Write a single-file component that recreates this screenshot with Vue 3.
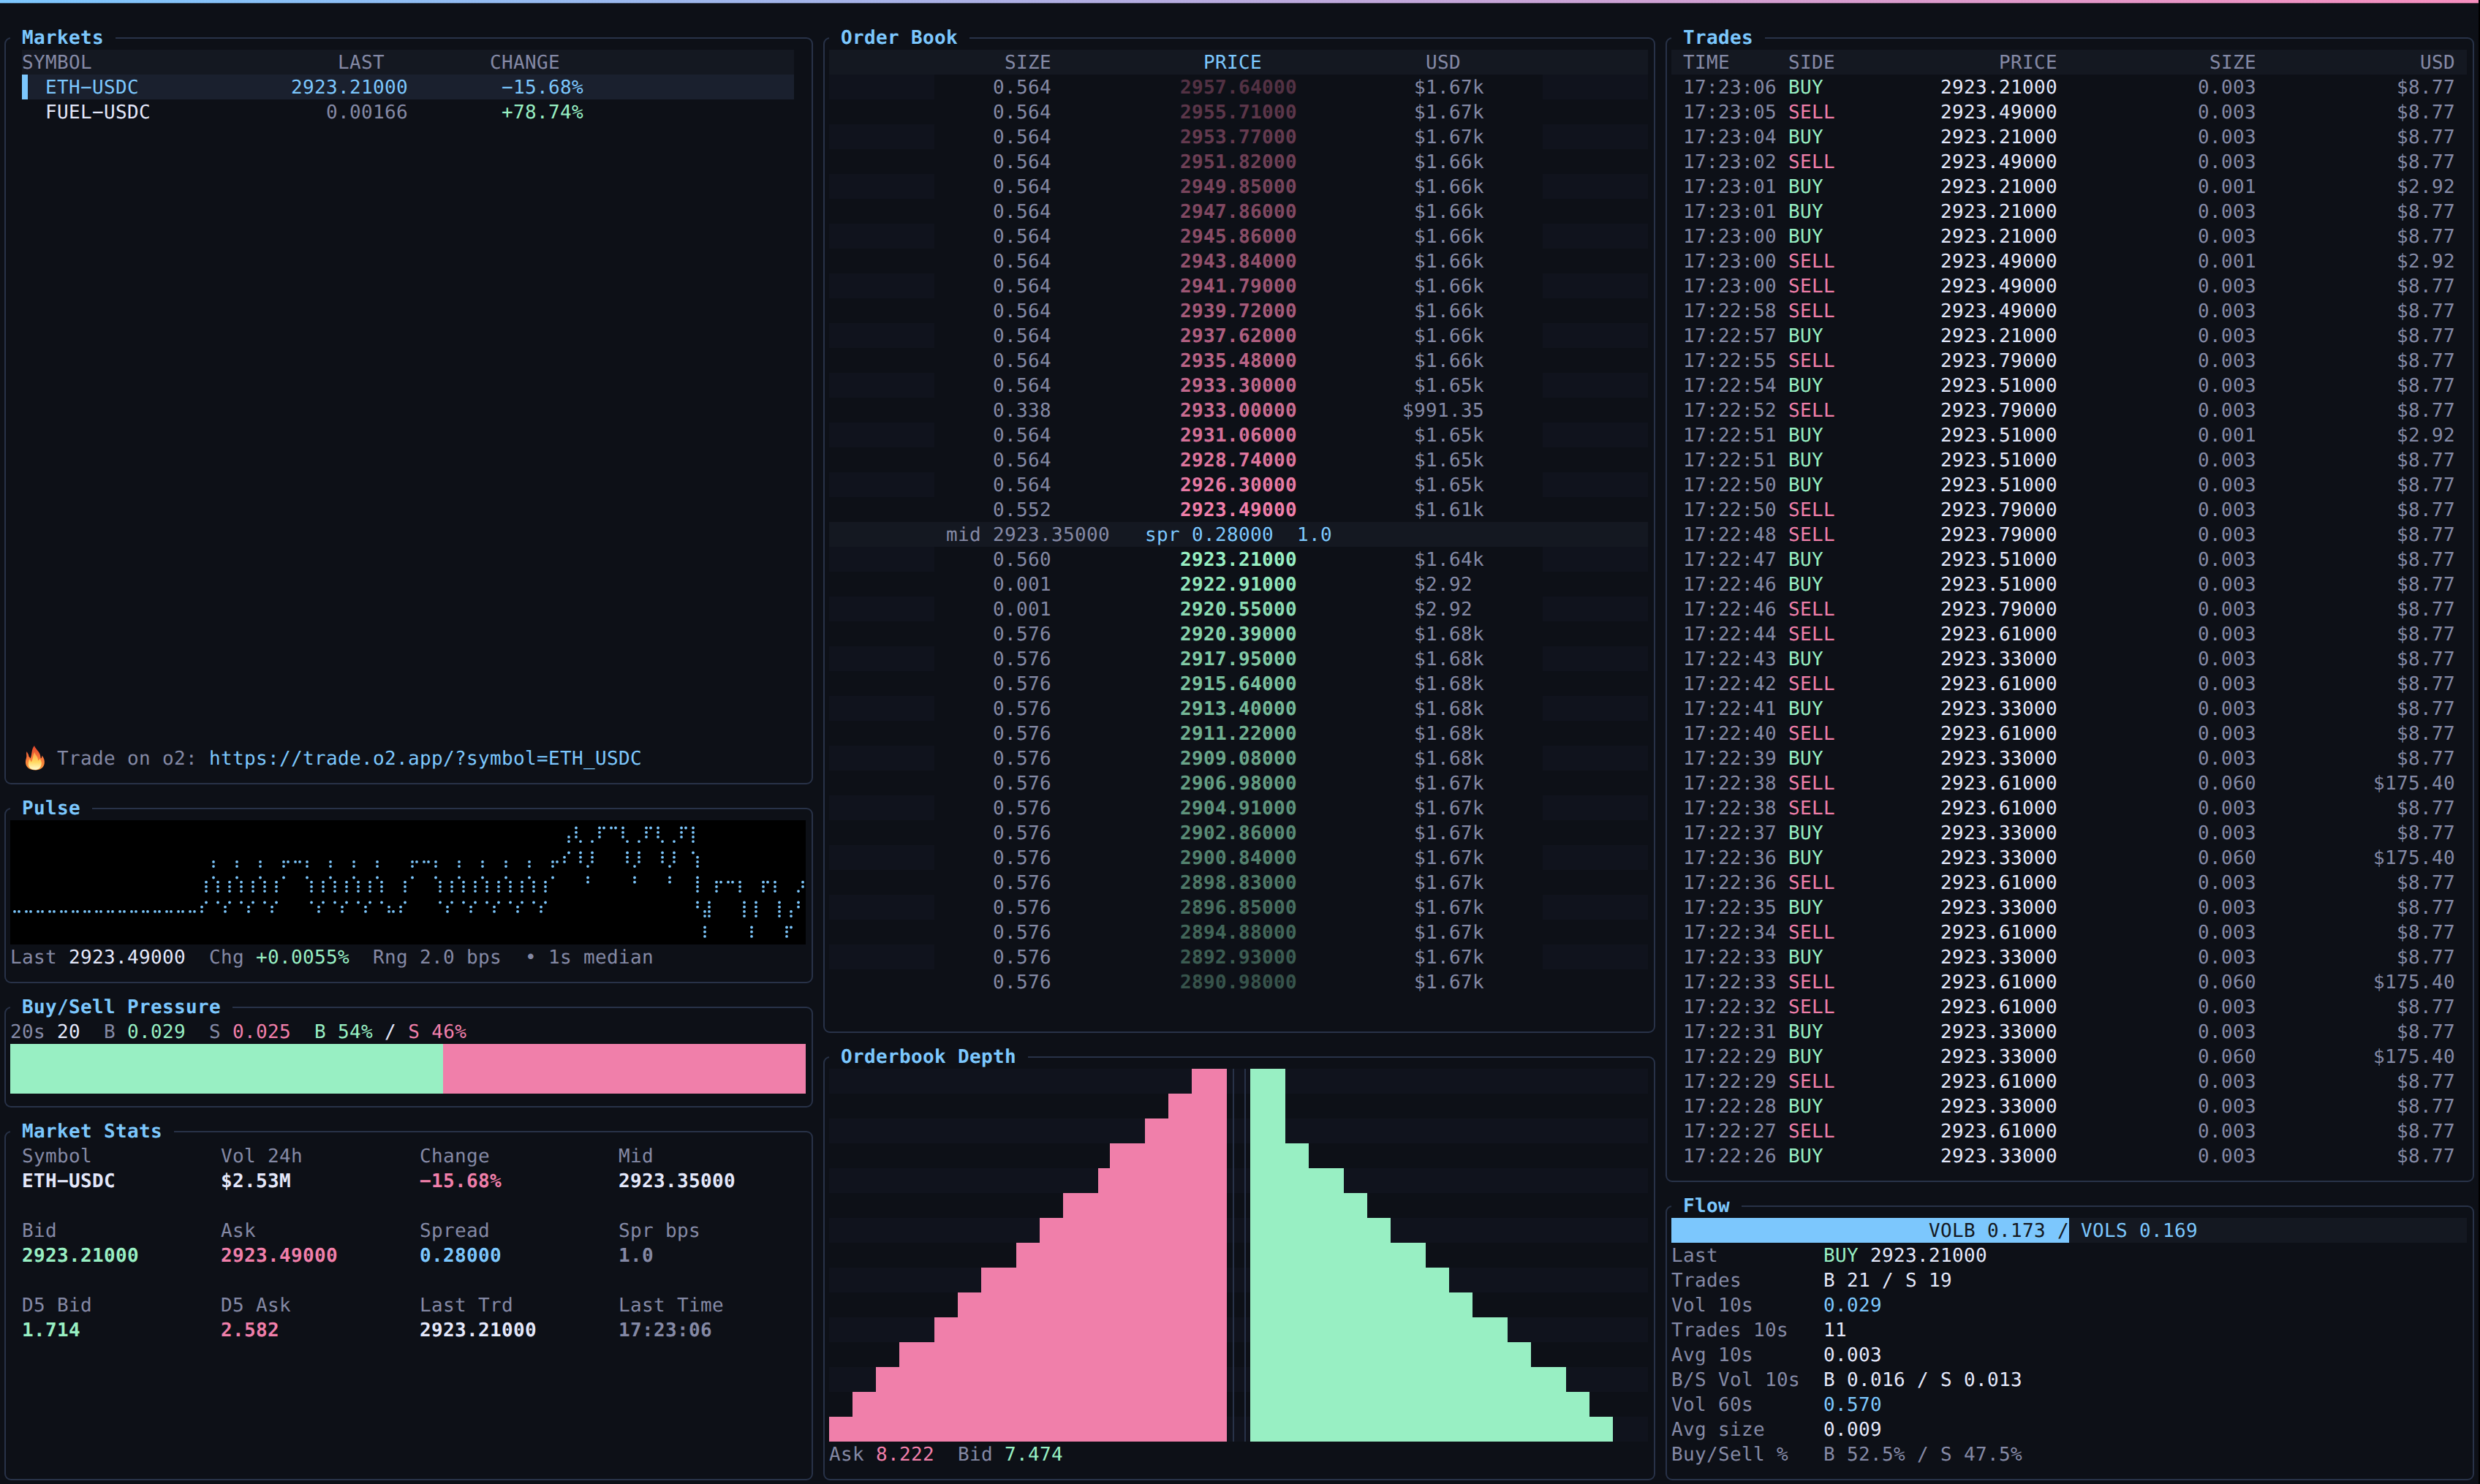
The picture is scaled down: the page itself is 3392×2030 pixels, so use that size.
<script setup>
const markets = [
  { symbol: 'ETH−USDC', last: '2923.21000', change: '−15.68%', active: true },
  { symbol: 'FUEL−USDC', last: '0.00166', change: '+78.74%', active: false },
]

// Sparkline: one [top, bottom] dot range per half-cell column, on a 20-dot high canvas.
const peak = [6, 8]
const slope = [9, 12]
const low = [13, 14]
const top = [6, 6]
const climb = [3, 6]
const wave = (n) => Array.from({ length: n }, () => [peak, slope, low, slope]).flat()
const pulse = [
  ...Array.from({ length: 32 }, () => [14, 14]),
  low, slope, ...wave(3),
  peak, top, top, top, peak, slope, low, slope,
  ...wave(2), peak, slope, low, [14, 14], low, slope,
  peak, top, top, top, peak, slope, low, slope,
  ...wave(4),
  peak, top, [5, 6], [2, 4], [0, 2], climb, [7, 9], climb,
  [0, 2], [0, 0], [0, 0], [0, 0], [0, 2], climb, [7, 9], climb,
  [0, 2], [0, 0], [0, 2], climb, [7, 9], climb,
  [0, 2], [0, 0], [0, 4], [5, 13], [14, 18], [12, 15],
  [9, 11], [9, 9], [9, 9], [9, 9], [9, 11], [12, 15], [16, 18], [12, 15],
  [9, 11], [9, 9], [9, 11], [12, 15], [16, 18], [14, 16], [11, 13], [9, 10],
]
const dots = pulse.flatMap(([a, b], i) => {
  const out = []
  for (let l = a; l <= b; l++) {
    out.push({
      x: Math.floor(i / 2) * 16 + (i % 2 ? 12 : 6),
      y: Math.floor(l / 4) * 34 + 10.5 + (l % 4) * 6.2,
    })
  }
  return out
})

// Status lines: [text, tone] runs, spacing included.
const pulseLine = [
  ['Last ', 'muted'], ['2923.49000', 'white'], ['  Chg ', 'muted'], ['+0.0055%', 'green'],
  ['  Rng 2.0 bps  • 1s median', 'muted'],
]
const pressureLine = [
  ['20s ', 'muted'], ['20', 'white'], ['  B ', 'muted'], ['0.029', 'green'],
  ['  S ', 'muted'], ['0.025', 'pink'], ['  B 54%', 'green'], [' / ', 'white'], ['S 46%', 'pink'],
]
const midLine = [['mid 2923.35000', 'muted'], ['   spr 0.28000  1.0', 'blue']]
const depthLine = [
  ['Ask ', 'muted'], ['8.222', 'pink'], ['  Bid ', 'muted'], ['7.474', 'green'],
]

const stats = [
  ['Symbol', 'ETH−USDC', 'white'], ['Vol 24h', '$2.53M', 'white'],
  ['Change', '−15.68%', 'pink'], ['Mid', '2923.35000', 'white'],
  ['Bid', '2923.21000', 'green'], ['Ask', '2923.49000', 'pink'],
  ['Spread', '0.28000', 'blue'], ['Spr bps', '1.0', 'muted'],
  ['D5 Bid', '1.714', 'green'], ['D5 Ask', '2.582', 'pink'],
  ['Last Trd', '2923.21000', 'white'], ['Last Time', '17:23:06', 'muted'],
]

// Odd-length values sit half a cell to the left, on the character grid.
const even = (s) => (s.length % 2 ? s + ' ' : s)

const asks = `0.564 2957.64 1.67k|0.564 2955.71 1.67k|0.564 2953.77 1.67k|0.564 2951.82 1.66k
|0.564 2949.85 1.66k|0.564 2947.86 1.66k|0.564 2945.86 1.66k|0.564 2943.84 1.66k
|0.564 2941.79 1.66k|0.564 2939.72 1.66k|0.564 2937.62 1.66k|0.564 2935.48 1.66k
|0.564 2933.30 1.65k|0.338 2933.00 991.35|0.564 2931.06 1.65k|0.564 2928.74 1.65k
|0.564 2926.30 1.65k|0.552 2923.49 1.61k`
const bids = `0.560 2923.21 1.64k|0.001 2922.91 2.92|0.001 2920.55 2.92|0.576 2920.39 1.68k
|0.576 2917.95 1.68k|0.576 2915.64 1.68k|0.576 2913.40 1.68k|0.576 2911.22 1.68k
|0.576 2909.08 1.68k|0.576 2906.98 1.67k|0.576 2904.91 1.67k|0.576 2902.86 1.67k
|0.576 2900.84 1.67k|0.576 2898.83 1.67k|0.576 2896.85 1.67k|0.576 2894.88 1.67k
|0.576 2892.93 1.67k|0.576 2890.98 1.67k`
const parseBook = (src) =>
  src.split('|').map((r) => {
    const [size, price, usd] = r.trim().split(' ')
    return { size, price: price + '000', usd: '$' + usd }
  })
const book = [
  {
    key: 'ask',
    tone: 'pink',
    rows: parseBook(asks).map((r, i, all) => ({ ...r, fade: 0.3 + (0.7 * i) / (all.length - 1) })),
  },
  {
    key: 'bid',
    tone: 'green',
    rows: parseBook(bids).map((r, i, all) => ({ ...r, fade: 1 - (0.7 * i) / (all.length - 1) })),
  },
]

const depthAsk = [3, 5, 7, 10, 11, 14, 16, 18, 21, 23, 25, 28, 30, 32, 34]
const depthBid = [3, 3, 3, 5, 8, 10, 12, 15, 17, 19, 22, 24, 27, 29, 31]
const depth = depthAsk.map((ask, i) => ({ ask, bid: depthBid[i] }))

const trades = `23:06 B 21 3|23:05 S 49 3|23:04 B 21 3|23:02 S 49 3|23:01 B 21 1|23:01 B 21 3
|23:00 B 21 3|23:00 S 49 1|23:00 S 49 3|22:58 S 49 3|22:57 B 21 3|22:55 S 79 3
|22:54 B 51 3|22:52 S 79 3|22:51 B 51 1|22:51 B 51 3|22:50 B 51 3|22:50 S 79 3
|22:48 S 79 3|22:47 B 51 3|22:46 B 51 3|22:46 S 79 3|22:44 S 61 3|22:43 B 33 3
|22:42 S 61 3|22:41 B 33 3|22:40 S 61 3|22:39 B 33 3|22:38 S 61 60|22:38 S 61 3
|22:37 B 33 3|22:36 B 33 60|22:36 S 61 3|22:35 B 33 3|22:34 S 61 3|22:33 B 33 3
|22:33 S 61 60|22:32 S 61 3|22:31 B 33 3|22:29 B 33 60|22:29 S 61 3|22:28 B 33 3
|22:27 S 61 3|22:26 B 33 3`
  .split('|')
  .map((r) => {
    const [time, side, cents, milli] = r.trim().split(' ')
    return {
      time: '17:' + time,
      side: side === 'B' ? 'BUY' : 'SELL',
      price: `2923.${cents}000`,
      size: '0.' + milli.padStart(3, '0'),
      usd: { 1: '$2.92', 3: '$8.77', 60: '$175.40' }[milli],
    }
  })

const flow = [
  ['Trades', 'B 21 / S 19', 'white'],
  ['Vol 10s', '0.029', 'blue'],
  ['Trades 10s', '11', 'white'],
  ['Avg 10s', '0.003', 'white'],
  ['B/S Vol 10s', 'B 0.016 / S 0.013', 'white'],
  ['Vol 60s', '0.570', 'blue'],
  ['Avg size', '0.009', 'white'],
  ['Buy/Sell %', 'B 52.5% / S 47.5%', 'muted'],
]
</script>

<template>
  <div class="screen">
    <div class="topbar"><i class="glow"></i><i class="edge"></i></div>
    <main class="columns">
      <div class="column">
        <section class="panel markets">
          <h2>Markets</h2>
          <div class="market head">
            <span>SYMBOL</span><span class="last">LAST</span><span class="change">CHANGE</span>
          </div>
          <div v-for="m in markets" :key="m.symbol" class="market" :class="{ active: m.active }">
            <span class="symbol">{{ m.symbol }}</span>
            <span class="last">{{ m.last }}</span>
            <span class="change">{{ m.change }}</span>
          </div>
          <div class="promo">
            <svg class="fire" viewBox="0 0 32 34">
              <defs>
                <linearGradient id="flame" x1="0" y1="0" x2="0" y2="1">
                  <stop offset="0" stop-color="#e0452c" />
                  <stop offset=".5" stop-color="#f7763a" />
                  <stop offset="1" stop-color="#fb9a3c" />
                </linearGradient>
                <linearGradient id="core" x1="0" y1="0" x2="0" y2="1">
                  <stop offset="0" stop-color="#fca048" />
                  <stop offset=".55" stop-color="#ffd75e" />
                  <stop offset="1" stop-color="#fffbd0" />
                </linearGradient>
              </defs>
              <path fill="url(#flame)" d="M17 0C18 4 24 8 25 13C25.600 15 25.500 16.500 26 17.500C27 16.500 27.500 15 27.600 13.500C30 17 31.300 20 30.800 24C30 30 25 33.500 18.500 33.500C11 33.500 5.500 30 5 23.500C4.700 20 6 18 6.300 15C6.500 12 5.500 11 6.500 8C7.500 10 9.300 11.500 9.500 15C10.500 15.500 11 16.500 11.500 17.500C14 13 12.500 5 17 0Z" />
              <path fill="url(#core)" d="M17.500 9C18 13 22.500 15 22 20.500C23.500 19.500 24 18.500 24.500 18C26.500 21 27.300 23 26.500 26C25.500 30.500 22.500 33 18 33C12.500 33 9 30 8.800 25.500C8.700 22.500 9.500 20.500 10 18.500C11.500 19.500 12.200 21 12.500 22.500C15.500 19 14.500 13 17.500 9Z" />
            </svg>
            <span>Trade on o2: <b class="link">https://trade.o2.app/?symbol=ETH_USDC</b></span>
          </div>
        </section>

        <section class="panel pulse">
          <h2>Pulse</h2>
          <svg class="spark" viewBox="0 0 1088 170">
            <circle v-for="(d, i) in dots" :key="i" :cx="d.x" :cy="d.y" r="1.9" />
          </svg>
          <p><i v-for="([text, tone], i) in pulseLine" :key="i" :class="tone">{{ text }}</i></p>
        </section>

        <section class="panel pressure">
          <h2>Buy/Sell Pressure</h2>
          <p><i v-for="([text, tone], i) in pressureLine" :key="i" :class="tone">{{ text }}</i></p>
          <div class="ratio"><i class="buy"></i><i class="sell"></i></div>
        </section>

        <section class="panel stats">
          <h2>Market Stats</h2>
          <div class="stat-grid">
            <div v-for="[label, value, tone] in stats" :key="label" class="stat">
              <span>{{ label }}</span><strong :class="tone">{{ value }}</strong>
            </div>
          </div>
        </section>
      </div>

      <div class="column">
        <section class="panel orderbook">
          <h2>Order Book</h2>
          <div class="level head">
            <i></i><span>SIZE</span><span class="blue">{{ even('PRICE') }}</span><span>{{ even('USD') }}</span><i></i>
          </div>
          <template v-for="side in book" :key="side.key">
            <p v-if="side.key === 'bid'" class="mid"><i v-for="([text, tone], i) in midLine" :key="i" :class="tone">{{ text }}</i></p>
            <div v-for="(r, i) in side.rows" :key="r.price" class="level" :class="{ striped: i % 2 === 0 }">
              <i></i>
              <span>{{ even(r.size) }}</span>
              <strong :class="side.tone" :style="{ opacity: r.fade }">{{ r.price }}</strong>
              <span>{{ even(r.usd) }}</span>
              <i></i>
            </div>
          </template>
        </section>

        <section class="panel depth">
          <h2>Orderbook Depth</h2>
          <div v-for="(d, i) in depth" :key="i" class="bar-row" :class="{ striped: i % 2 === 0 }">
            <div class="half ask"><i :style="{ width: d.ask * 16 + 'px' }"></i></div>
            <div class="axis"><i></i><i></i></div>
            <div class="half bid"><i :style="{ width: d.bid * 16 + 'px' }"></i></div>
          </div>
          <p><i v-for="([text, tone], i) in depthLine" :key="i" :class="tone">{{ text }}</i></p>
        </section>
      </div>

      <div class="column">
        <section class="panel trades">
          <h2>Trades</h2>
          <div class="trade head">
            <span>TIME</span><span>SIDE</span><span>PRICE</span><span>SIZE</span><span>USD</span>
          </div>
          <div v-for="(t, i) in trades" :key="i" class="trade">
            <span>{{ t.time }}</span>
            <span :class="t.side === 'BUY' ? 'green' : 'pink'">{{ t.side }}</span>
            <span class="white">{{ t.price }}</span>
            <span>{{ t.size }}</span>
            <span>{{ t.usd }}</span>
          </div>
        </section>

        <section class="panel flow">
          <h2>Flow</h2>
          <div class="volume"><span class="volb">VOLB 0.173 /</span><span class="vols">VOLS 0.169</span></div>
          <div class="fact"><span>Last</span><span class="white"><i class="green">BUY</i> 2923.21000</span></div>
          <div v-for="[label, value, tone] in flow" :key="label" class="fact">
            <span>{{ label }}</span><span :class="tone">{{ value }}</span>
          </div>
        </section>
      </div>
    </main>
  </div>
</template>

<style>
body {
  margin: 0;
  background: #000;
}
</style>

<style scoped>
/* Everything sits on a 16 x 34 character grid; the 36px line box centres glyphs in a 34px row. */
.screen {
  --bg: #0d1017;
  --head: #141821;
  --stripe: #10131d;
  --line: #283248;
  --muted: #8489a5;
  --blue: #7cc7fd;
  --green: #98efc3;
  --pink: #f07faa;
  box-sizing: border-box;
  width: 3390px;
  height: 2030px;
  overflow: hidden;
  background: var(--bg);
  color: var(--muted);
  font: 26px/36px "DejaVu Sans Mono", "Liberation Mono", monospace;
  letter-spacing: 0.3467px;
  text-rendering: geometricPrecision;
  font-variant-ligatures: none;
  white-space: pre;
}
i {
  font-style: normal;
}
.white { color: #e4e8fb; }
.green { color: var(--green); }
.pink { color: var(--pink); }
.blue { color: var(--blue); }
.muted { color: var(--muted); }

.topbar {
  height: 34px;
}
.topbar i {
  display: block;
  background: linear-gradient(90deg, #7cc7ff, #f78fbf);
}
.glow { height: 4px; }
.topbar .edge {
  height: 1px;
  opacity: 0.28;
}

.columns {
  display: grid;
  grid-template-columns: 1120px 1152px 1120px;
  margin-left: -2px;
}
.column {
  display: flex;
  flex-direction: column;
}
.panel {
  box-sizing: border-box;
  flex: none;
  margin: 17px 6px 15px 8px;
  padding: 0 8px 17px 6px;
  border: 2px solid var(--line);
  border-radius: 9px;
  display: flex;
  flex-direction: column;
}
.markets { height: 1022px; }
.pulse { height: 240px; }
.pressure { height: 138px; }
.stats { height: 478px; }
.orderbook { height: 1362px; }
.depth { height: 580px; }
.trades { height: 1566px; }
.flow { height: 376px; }

h2 {
  align-self: flex-start;
  height: 34px;
  margin: -19px 0 0;
  padding: 0 16px;
  background: var(--bg);
  color: var(--blue);
  font: inherit;
  font-weight: 700;
}
p {
  height: 34px;
  margin: 0;
}
.head {
  background: var(--head);
}

.market {
  display: grid;
  grid-template: 34px / 352px 176px 1fr;
  margin: 0 16px;
}
.market .symbol {
  padding-left: 32px;
  color: #e4e8fb;
}
.market .last {
  text-align: right;
}
.market .change {
  padding-left: 128px;
  color: var(--green);
}
.market.head .last {
  padding-right: 32px;
}
.market.head .change {
  padding-left: 112px;
  color: inherit;
}
.market.active {
  background: #1a202e;
}
.market.active span {
  color: var(--blue);
}
.market.active .symbol {
  padding-left: 24px;
  border-left: 8px solid var(--blue);
}
.promo {
  display: flex;
  gap: 16px;
  height: 34px;
  margin: auto 16px 0;
}
.fire {
  width: 32px;
  height: 34px;
}
.link {
  font-weight: 400;
  color: var(--blue);
}

.spark {
  display: block;
  width: 1088px;
  height: 170px;
  background: #000;
  fill: var(--blue);
}
.ratio {
  display: flex;
  height: 68px;
}
.buy {
  width: 592px;
  background: var(--green);
}
.sell {
  flex: 1;
  background: var(--pink);
}
.stat-grid {
  display: grid;
  grid-template-columns: repeat(4, 272px);
  row-gap: 34px;
  margin-left: 16px;
}
.stat {
  display: grid;
  grid-template-rows: 34px 34px;
}

.level {
  display: grid;
  grid-template: 34px / 144px 256px 320px 256px 144px;
  text-align: center;
}
.level.striped i {
  background: var(--stripe);
}
.mid {
  padding-left: 160px;
  background: var(--head);
}

.bar-row {
  display: grid;
  grid-template: 34px / 544px 32px 544px;
}
.bar-row.striped {
  background: var(--stripe);
}
.half {
  display: flex;
}
.half.ask {
  justify-content: flex-end;
}
.ask i { background: var(--pink); }
.bid i { background: var(--green); }
.axis {
  display: flex;
  gap: 14px;
  padding-left: 8px;
}
.axis i {
  width: 2px;
  background: var(--line);
}

.trade {
  display: grid;
  grid-template: 34px / 144px 64px 304px 272px 272px;
  padding: 0 16px;
}
.trade span:nth-child(n + 3) {
  text-align: right;
}
.volume {
  display: flex;
  height: 34px;
  background: var(--head);
}
.volb {
  width: 544px;
  background: var(--blue);
  color: var(--head);
  text-align: right;
}
.vols {
  padding-left: 16px;
  color: var(--blue);
}
.fact {
  display: grid;
  grid-template: 34px / 208px 1fr;
}
</style>
